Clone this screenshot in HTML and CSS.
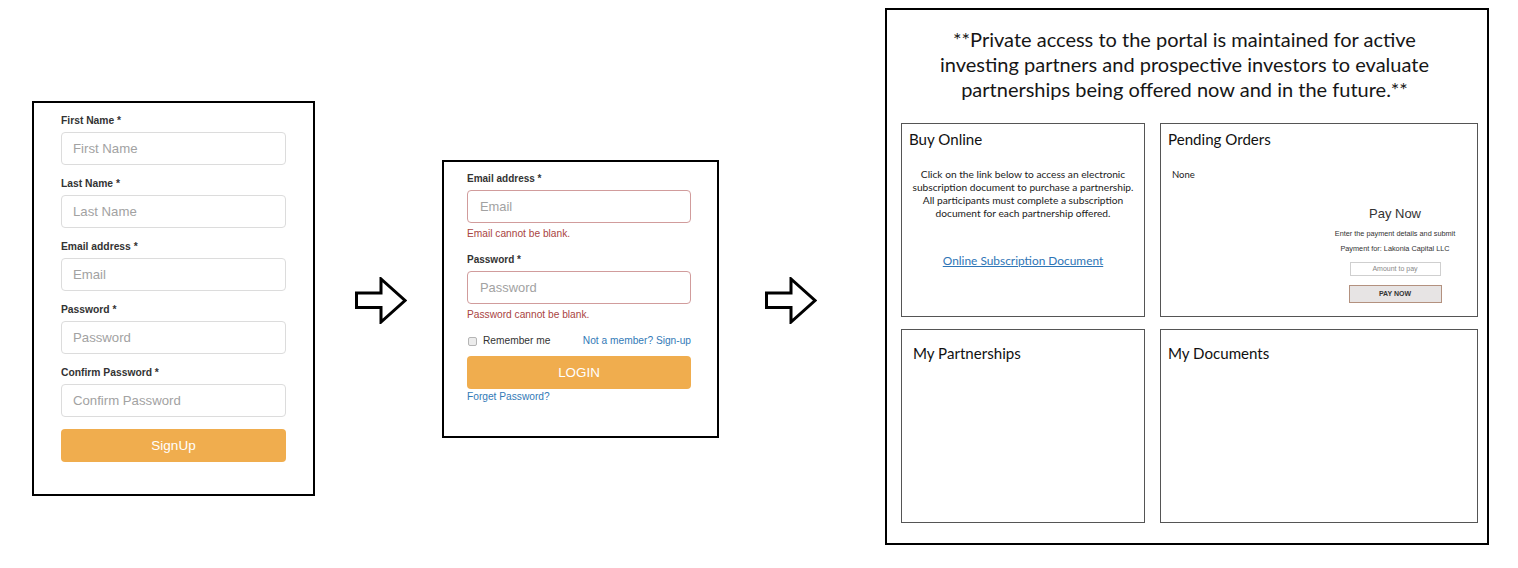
FILE: index.html
```html
<!DOCTYPE html>
<html lang="en">
<head>
<meta charset="utf-8">
<title>Portal flow</title>
<link rel="stylesheet" href="styles.css">
</head>
<body>
<div class="flow">
  <div class="panel signup">
    <div class="group">
      <label class="lbl">First Name *</label>
      <input class="field" type="text" placeholder="First Name">
    </div>
    <div class="group">
      <label class="lbl">Last Name *</label>
      <input class="field" type="text" placeholder="Last Name">
    </div>
    <div class="group">
      <label class="lbl">Email address *</label>
      <input class="field" type="text" placeholder="Email">
    </div>
    <div class="group">
      <label class="lbl">Password *</label>
      <input class="field" type="text" placeholder="Password">
    </div>
    <div class="group">
      <label class="lbl">Confirm Password *</label>
      <input class="field" type="text" placeholder="Confirm Password">
    </div>
    <button class="btn">SignUp</button>
  </div>

  <svg class="arrow arrow-one" width="52" height="47" viewBox="0 0 52 47" aria-hidden="true">
    <path d="M1.5 16 H26 V2 L50 23.5 L26 45 V30.5 H1.5 Z" fill="#fff" stroke="#000" stroke-width="3" stroke-linejoin="miter"/>
  </svg>

  <div class="panel login">
    <label class="lbl lbl-sm">Email address *</label>
    <input class="field err" type="text" placeholder="Email">
    <div class="errmsg">Email cannot be blank.</div>
    <label class="lbl lbl-sm lbl-gap">Password *</label>
    <input class="field err" type="text" placeholder="Password">
    <div class="errmsg">Password cannot be blank.</div>
    <div class="remember-row">
      <span class="remember"><input class="check" type="checkbox">Remember me</span>
      <a class="link" href="#">Not a member? Sign-up</a>
    </div>
    <button class="btn btn-login">LOGIN</button>
    <a class="link forget" href="#">Forget Password?</a>
  </div>

  <svg class="arrow arrow-two" width="52" height="47" viewBox="0 0 52 47" aria-hidden="true">
    <path d="M1.5 16 H26 V2 L50 23.5 L26 45 V30.5 H1.5 Z" fill="#fff" stroke="#000" stroke-width="3" stroke-linejoin="miter"/>
  </svg>

  <div class="panel portal">
    <p class="notice">**Private access to the portal is maintained for active<br>investing partners and prospective investors to evaluate<br>partnerships being offered now and in the future.**</p>
    <div class="cards">
      <div class="card buy">
        <h2 class="card-title">Buy Online</h2>
        <p class="buy-text">Click on the link below to access an electronic<br>subscription document to purchase a partnership.<br>All participants must complete a subscription<br>document for each partnership offered.</p>
        <a class="doc-link" href="#">Online Subscription Document</a>
      </div>
      <div class="card pending">
        <h2 class="card-title">Pending Orders</h2>
        <p class="none">None</p>
        <div class="pay">
          <div class="pay-title">Pay Now</div>
          <div class="pay-small">Enter the payment details and submit</div>
          <div class="pay-small pay-for">Payment for: Lakonia Capital LLC</div>
          <div class="amount">Amount to pay</div>
          <div class="pay-btn">PAY NOW</div>
        </div>
      </div>
      <div class="card">
        <h2 class="card-title card-title-low">My Partnerships</h2>
      </div>
      <div class="card">
        <h2 class="card-title card-title-low2">My Documents</h2>
      </div>
    </div>
  </div>
</div>
</body>
</html>
```

FILE: styles.css
```css
* { box-sizing: border-box; }

html, body {
  margin: 0;
  padding: 0;
  background: #fff;
}

body {
  width: 1518px;
  height: 568px;
  overflow: hidden;
  font-family: "Liberation Sans", Arial, sans-serif;
  color: #333;
}

.flow {
  display: flex;
  align-items: flex-start;
}

.panel {
  border: 2px solid #000;
  background: #fff;
  flex: none;
}

/* ---------- sign up ---------- */
.signup {
  width: 283px;
  height: 395px;
  margin-left: 32px;
  margin-top: 101px;
  padding: 11px 27px 0 27px;
}

.group {
  margin-bottom: 12px;
}

.lbl {
  display: block;
  font-size: 10.3px;
  line-height: 14px;
  font-weight: bold;
  color: #333;
  margin-bottom: 4px;
}

.lbl-sm {
  font-size: 10px;
}

.field {
  display: block;
  width: 225px;
  height: 33px;
  border: 1px solid #dcdcdc;
  border-radius: 4px;
  padding: 0 11px;
  font-family: "Liberation Sans", Arial, sans-serif;
  font-size: 13.2px;
  color: #555;
  background: #fff;
  outline: none;
}

.field::placeholder {
  color: #a2a2a2;
}

.btn {
  display: block;
  width: 225px;
  height: 33px;
  border: none;
  border-radius: 4px;
  background: #f0ad4e;
  color: #fff;
  font-family: "Liberation Sans", Arial, sans-serif;
  font-size: 13.5px;
  padding: 0;
}

/* ---------- arrows ---------- */
.arrow {
  flex: none;
  display: block;
  margin-top: 277px;
}

.arrow-one { margin-left: 40px; }
.arrow-two { margin-left: 46px; }

/* ---------- login ---------- */
.login {
  width: 277px;
  height: 278px;
  margin-left: 35px;
  margin-top: 160px;
  padding: 10px 0 0 23px;
}

.login .field,
.login .btn {
  width: 224px;
}

.login .field {
  font-size: 12.9px;
  padding: 0 12px;
}

.field.err {
  border-color: #d19c9c;
}

.errmsg {
  font-size: 10.2px;
  line-height: 14px;
  color: #a94442;
  margin-top: 4px;
}

.lbl-gap {
  margin-top: 12px;
}

.remember-row {
  width: 224px;
  margin-top: 12px;
  display: flex;
  justify-content: space-between;
  align-items: center;
  font-size: 10.2px;
  line-height: 14px;
}

.remember {
  display: flex;
  align-items: center;
  color: #333;
}

.check {
  appearance: none;
  -webkit-appearance: none;
  width: 9px;
  height: 9px;
  margin: 0 6px 0 1px;
  border: 1px solid #b5b5b5;
  border-radius: 2px;
  background: #ececec;
}

.link {
  color: #337ab7;
  text-decoration: none;
  font-size: 10.2px;
  line-height: 14px;
}

.btn-login {
  margin-top: 8px;
  font-size: 13.4px;
}

.forget {
  display: block;
  margin-top: 1px;
}

/* ---------- portal ---------- */
.portal {
  width: 604px;
  height: 537px;
  margin-left: 68px;
  margin-top: 8px;
  padding: 17px 9px 0 14px;
  font-family: Lato, "Open Sans", sans-serif;
  color: #111;
}

.notice {
  margin: 0 0 21px 0;
  text-align: center;
  font-size: 20px;
  line-height: 25px;
  color: #161616;
  padding-right: 10px;
}

.cards {
  display: grid;
  grid-template-columns: 244px 318px;
  grid-template-rows: 194px 194px;
  column-gap: 15px;
  row-gap: 12px;
}

.card {
  border: 1px solid #555;
}

.card-title {
  margin: 0;
  font-weight: normal;
  font-size: 15.1px;
  line-height: 18px;
  color: #111;
  padding: 6px 0 0 7px;
}

.card-title-low {
  padding: 14px 0 0 11px;
}

.card-title-low2 {
  padding: 14px 0 0 7px;
}

.buy-text {
  margin: 20px 0 0 0;
  text-align: center;
  font-size: 10.2px;
  line-height: 13px;
  color: #222;
}

.doc-link {
  display: block;
  text-align: center;
  margin-top: 34px;
  font-size: 11.9px;
  line-height: 14px;
  color: #2e75b6;
  text-decoration: underline;
}

.none {
  margin: 20px 0 0 11px;
  font-size: 9.5px;
  line-height: 13px;
  color: #222;
}

.pay {
  width: 160px;
  margin: 25px 2px 0 auto;
  text-align: center;
  font-family: "Liberation Sans", Arial, sans-serif;
  color: #333;
  display: flex;
  flex-direction: column;
  align-items: center;
}

.pay-title {
  font-size: 13px;
  line-height: 16px;
}

.pay-small {
  font-size: 7.3px;
  line-height: 9px;
  margin-top: 7px;
}

.pay-for {
  margin-top: 6px;
}

.amount {
  width: 91px;
  height: 14px;
  margin-top: 9px;
  border: 1px solid #cfcfcf;
  font-size: 7px;
  line-height: 12px;
  color: #888;
}

.pay-btn {
  width: 93px;
  height: 18px;
  margin-top: 9px;
  border: 1px solid #b3917f;
  background: #e7e4e4;
  font-size: 7px;
  line-height: 16px;
  font-weight: bold;
  color: #333;
}
```
